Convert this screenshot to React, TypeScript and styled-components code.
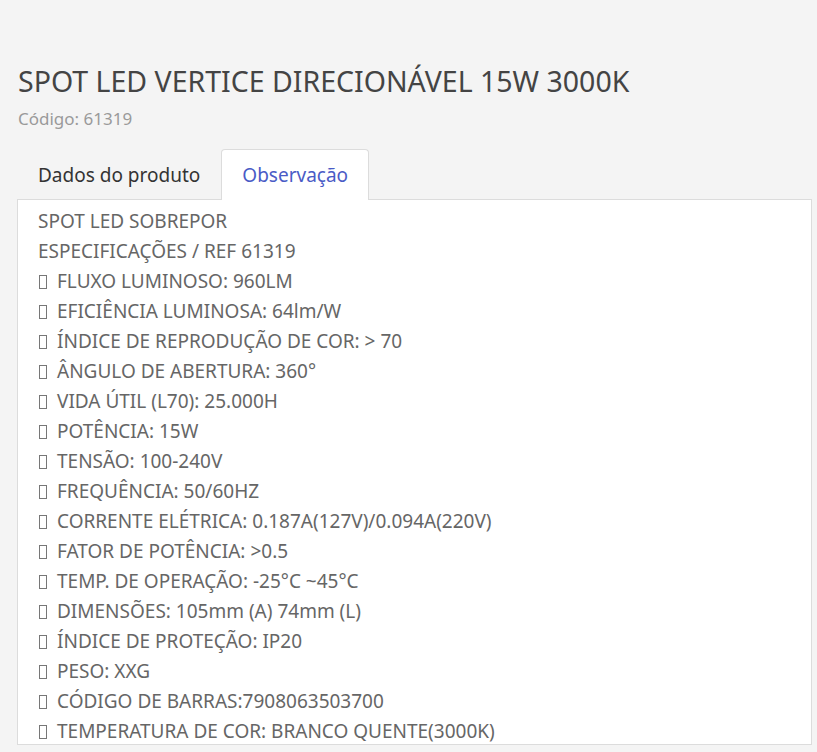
import { createGlobalStyle } from 'styled-components';
import styled from 'styled-components';
import { useState } from 'react';

const intro = ['SPOT LED SOBREPOR', 'ESPECIFICAÇÕES / REF 61319'];

const specs = [
    'FLUXO LUMINOSO: 960LM',
    'EFICIÊNCIA LUMINOSA: 64lm/W',
    'ÍNDICE DE REPRODUÇÃO DE COR: > 70',
    'ÂNGULO DE ABERTURA: 360°',
    'VIDA ÚTIL (L70): 25.000H',
    'POTÊNCIA: 15W',
    'TENSÃO: 100-240V',
    'FREQUÊNCIA: 50/60HZ',
    'CORRENTE ELÉTRICA: 0.187A(127V)/0.094A(220V)',
    'FATOR DE POTÊNCIA: >0.5',
    'TEMP. DE OPERAÇÃO: -25°C ~45°C',
    'DIMENSÕES: 105mm (A) 74mm (L)',
    'ÍNDICE DE PROTEÇÃO: IP20',
    'PESO: XXG',
    'CÓDIGO DE BARRAS:7908063503700',
    'TEMPERATURA DE COR: BRANCO QUENTE(3000K)'
];

const GlobalStyle = createGlobalStyle`
    html, body {
        margin: 0;
        padding: 0;
        background: #f4f4f4;
        font-family: 'Noto Sans', 'Open Sans', sans-serif;
    }
`;

const App = () => {
    const [tab, setTab] = useState(1);

    return (
        <Page>
            <GlobalStyle />
            <Title>SPOT LED VERTICE DIRECIONÁVEL 15W 3000K</Title>
            <Code>Código: 61319</Code>
            <Tabs>
                <Tab active={tab === 0} onClick={() => setTab(0)}>
                    Dados do produto
                </Tab>
                <Tab active={tab === 1} onClick={() => setTab(1)}>
                    Observação
                </Tab>
            </Tabs>
            <Panel>
                {intro.map(line => (
                    <Line key={line}>{line}</Line>
                ))}
                {specs.map(line => (
                    <Line key={line}>
                        <Bullet />
                        {line}
                    </Line>
                ))}
            </Panel>
        </Page>
    );
};

const Page = styled.div`
    padding: 62px 5px 0 17px;
    height: 752px;
    box-sizing: border-box;
    overflow: hidden;
`;

const Title = styled.h1`
    margin: 0 0 0 1px;
    font-size: 28.5px;
    font-weight: 400;
    line-height: 38px;
    color: #444;
`;

const Code = styled.div`
    margin: 7px 0 0 1px;
    font-size: 17px;
    line-height: 24px;
    color: #9a9a9a;
`;

const Tabs = styled.div`
    display: flex;
    margin-top: 18px;
`;

const Tab = styled.div<{ active?: boolean }>`
    height: 51px;
    box-sizing: border-box;
    padding: 0 20px;
    display: flex;
    align-items: center;
    font-size: 19px;
    cursor: pointer;
    color: ${p => (p.active ? '#4a5bc6' : '#333')};
    background: ${p => (p.active ? '#fff' : 'transparent')};
    border: 1px solid ${p => (p.active ? '#dcdcdc' : 'transparent')};
    border-bottom: none;
    border-radius: 4px 4px 0 0;
    margin-bottom: -1px;
    position: relative;
`;

const Panel = styled.div`
    background: #fff;
    border: 1px solid #dcdcdc;
    padding: 6px 20px 0;
    height: 546px;
    box-sizing: border-box;
`;

const Line = styled.div`
    display: flex;
    align-items: center;
    font-size: 19px;
    line-height: 30px;
    color: #666;
    white-space: nowrap;
`;

const Bullet = styled.span`
    width: 8px;
    height: 14px;
    box-sizing: border-box;
    border: 1px solid #777;
    margin: 1px 10px 0 1px;
    flex-shrink: 0;
`;

export default App;
